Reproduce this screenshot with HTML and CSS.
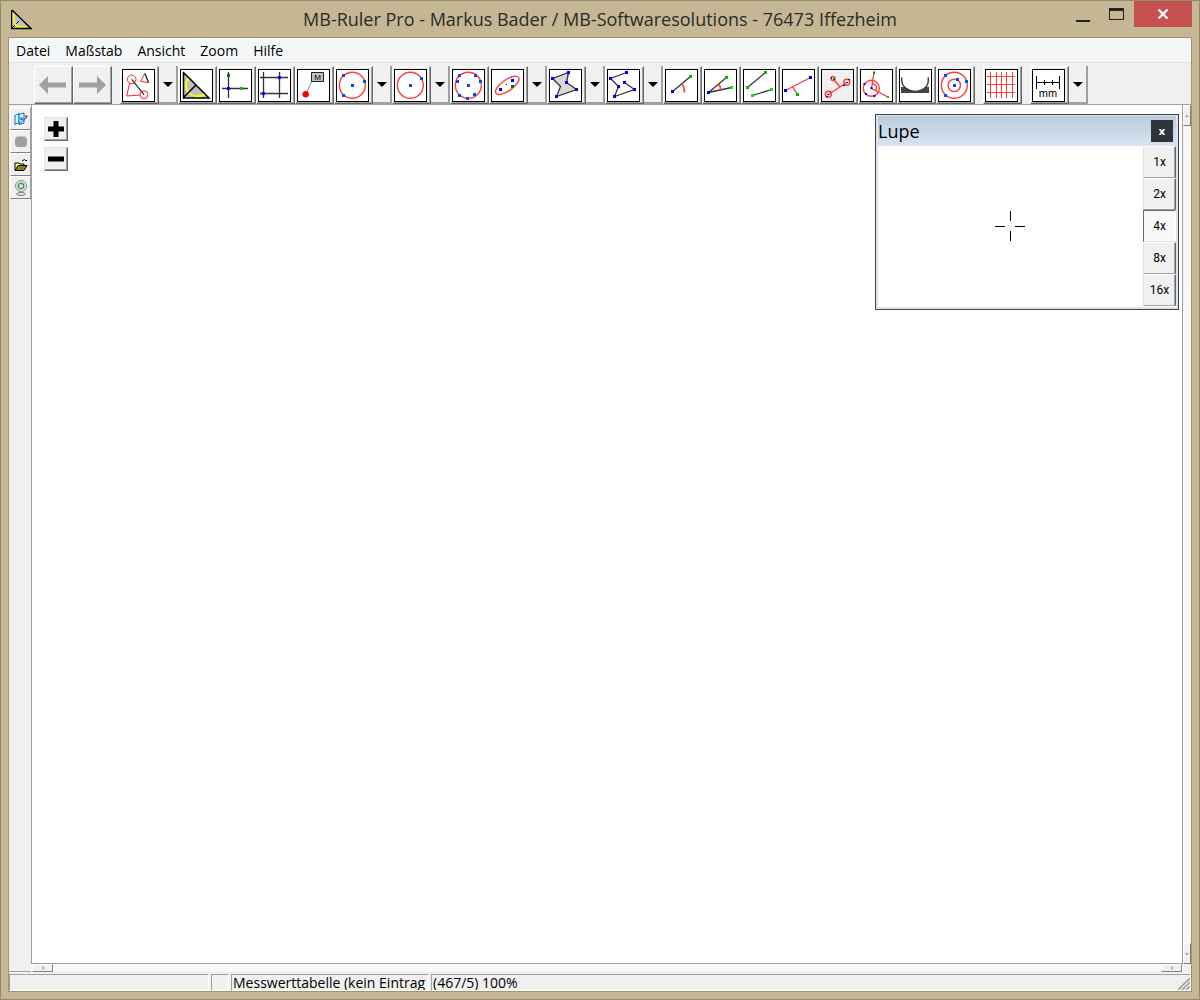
FILE: index.html
```html
<!DOCTYPE html>
<html lang="de">
<head>
<meta charset="utf-8">
<meta name="viewport" content="width=device-width, initial-scale=1">
<title>MB-Ruler Pro</title>
<link rel="stylesheet" href="styles.css">
</head>
<body>
<div class="window">
  <header class="titlebar">
    <svg class="app-icon" viewBox="0 0 21 21" aria-hidden="true"><path d="M1 1v18h18z" fill="#c0c0c0"/><path d="M3 4v8q1 5 5 6h7" fill="none" stroke="#ff0" stroke-width="1.6"/><path d="M1 19l8-8" stroke="#000" stroke-dasharray="4 2"/><path d="M.5 1v18.5H20L1 1" fill="none" stroke="#000" stroke-width="1.4"/></svg>
    <h1 class="caption">MB-Ruler Pro - Markus Bader / MB-Softwaresolutions - 76473 Iffezheim</h1>
    <div class="window-controls">
      <button class="control" aria-label="Minimieren"><svg width="14" height="16" viewBox="0 0 14 16"><path d="M0 14h14v2H0z" fill="#222"/></svg></button>
      <button class="control" aria-label="Maximieren"><svg width="15" height="12" viewBox="0 0 15 12"><path d="M0 0h15v12H0zM1 3v8h13V3z" fill="#222" fill-rule="evenodd"/></svg></button>
      <button class="control close" aria-label="Schließen"><svg width="12" height="10" viewBox="0 0 12 10"><path d="M1.500 .5l9 9M10.500 .5l-9 9" stroke="#fff" stroke-width="2.200"/></svg></button>
    </div>
  </header>

  <div class="client">
    <nav class="menu">
      <a href="#">Datei</a><a href="#">Maßstab</a><a href="#">Ansicht</a><a href="#">Zoom</a><a href="#">Hilfe</a>
    </nav>

    <div class="toolbar" role="toolbar" aria-label="Werkzeuge">
      <div class="group">
        <button class="tool" aria-label="Zurück"><svg class="arrow" viewBox="0 0 28 18"><path d="M0 9l9-9v6.500h18v5H9V18z"/></svg></button>
        <button class="tool" aria-label="Vor"><svg class="arrow" viewBox="0 0 28 18"><path d="M28 9l-9-9v6.500H1v5h18V18z"/></svg></button>
      </div>
      <div class="group">
        <button class="tool" aria-label="Objekte"><svg class="icon" viewBox="1 1 31 31"><path class="red" d="M7.700 14L4.700 27l14-1M22.700 4.500l-4 8 8 1z"/><circle class="red" cx="9.700" cy="10.300" r="4.300"/><circle class="red" cx="22" cy="25.700" r="4"/><path class="dark" d="M9.700 10.300L22 25.700M23 4.500l3.500 9"/></svg></button>
        <button class="drop" aria-label="Objekte wählen"></button>
        <button class="tool" aria-label="Geodreieck"><svg class="icon" viewBox="1 1 31 31"><path d="M3 3v26h26z" fill="#c0c0c0"/><path d="M8.500 9C1 18 10 32 25 25.500" fill="none" stroke="#ff0" stroke-width="2"/><path d="M3.500 3v26H29L3 3M3 29l13-13" fill="none" stroke="#000" stroke-width="1.500"/></svg></button>
        <button class="tool" aria-label="Koordinatensystem"><svg class="icon" viewBox="1 1 31 31"><path class="dark" d="M9.500 3v26M3 19.500h26"/><path class="dot darkgreen" d="M9.500 6.500h0"/><path class="dot blue" d="M9.500 19.500h0"/><path class="dot green" d="M22.500 19.500h0"/></svg></button>
        <button class="tool" aria-label="Linien"><svg class="icon" viewBox="1 1 31 31"><path class="dark" d="M5.500 3v26M21.500 3v26M2 8.500h28M2 24.500h28"/><path class="dot blue" d="M21.500 8.500h0M5.500 24.500h0"/></svg></button>
        <button class="tool" aria-label="Messpunkt"><svg class="icon" viewBox="1 1 31 31"><path d="M8.700 25L15 12" stroke="#888"/><circle cx="8.700" cy="25.300" r="3.200" fill="red"/><path d="M14.500 3.500h12v9h-12z" fill="#c0c0c0" stroke="#222"/><text x="20.500" y="11" text-anchor="middle" font-size="8">M</text></svg></button>
        <button class="tool" aria-label="Kreis durch drei Punkte"><svg class="icon" viewBox="1 1 31 31"><circle class="ring" cx="16.300" cy="16.300" r="13"/><path class="dot azure" d="M16.500 16.500h0M7.500 6.500h0M28.500 12.500h0M7.500 26.500h0"/></svg></button>
        <button class="drop" aria-label="Kreis wählen"></button>
        <button class="tool" aria-label="Kreis mit Mittelpunkt"><svg class="icon" viewBox="1 1 31 31"><circle class="ring" cx="16.300" cy="16.300" r="13"/><path class="dot azure" d="M16.500 16.500h0M27.500 9.500h0"/></svg></button>
        <button class="drop" aria-label="Mittelpunktkreis wählen"></button>
        <button class="tool" aria-label="Ausgleichskreis"><svg class="icon" viewBox="1 1 31 31"><circle class="ring" cx="16.300" cy="16.300" r="13"/><path class="dot azure" d="M16.500 16.500h0M7.500 6.500h0M23.500 6.500h0M5.500 12.500h0M28.500 12.500h0M7.500 26.500h0M22.500 25.500h0M15.500 29.500h0"/></svg></button>
        <button class="tool" aria-label="Ellipse"><svg class="icon" viewBox="1 1 31 31"><ellipse class="ring" cx="16.300" cy="16.300" rx="13.800" ry="5.500" transform="rotate(-35 16.300 16.300)"/><path class="dot blue" d="M9.500 20.500h0M21.500 11.500h0"/><path class="dot darkgreen" d="M21.500 17.500h0"/><path d="M15 15h1v1h-1z" fill="#00c"/></svg></button>
        <button class="drop" aria-label="Ellipse wählen"></button>
        <button class="tool" aria-label="Polygon"><svg class="icon" viewBox="1 1 31 31"><path class="dark filled" d="M19.500 3.500l-2 10 10 7-20 7 4-10-8-8z"/><path class="dot blue" d="M19.500 3.500h0M17.500 13.500h0M27.500 20.500h0M7.500 27.500h0M3.500 9.500h0"/></svg></button>
        <button class="drop" aria-label="Polygon wählen"></button>
        <button class="tool" aria-label="Linienzug"><svg class="icon" viewBox="1 1 31 31"><path class="dark" d="M19.500 3.500l-16 6 8 8-4 10 20-7-10-7"/><path class="dot blue" d="M19.500 3.500h0M3.500 9.500h0M11.500 17.500h0M7.500 27.500h0M27.500 20.500h0M17.500 13.500h0"/></svg></button>
        <button class="drop" aria-label="Linienzug wählen"></button>
        <button class="tool" aria-label="Strecke"><svg class="icon" viewBox="1 1 31 31"><path class="dark" d="M7.500 22.500l18-15"/><path class="arc" d="M16.500 14.500q3 3 3 9"/><path class="dot blue" d="M7.500 22.500h0"/><path class="dot darkgreen2" d="M25.500 7.500h0"/></svg></button>
        <button class="tool" aria-label="Winkel"><svg class="icon" viewBox="1 1 31 31"><path class="dark" d="M22.500 8.500l-18 15 23-5"/><path class="arc" d="M14 14.500q3 3 2.500 7"/><path class="dot blue" d="M4.500 23.500h0"/><path class="dot darkgreen2" d="M22.500 8.500h0"/><path class="dot lime" d="M27.500 18.500h0"/></svg></button>
        <button class="tool" aria-label="Winkel zwischen zwei Linien"><svg class="icon" viewBox="1 1 31 31"><path class="dark" d="M4.500 18.500l18-15M9.500 26.500l19-6"/><path class="dot darkgreen2" d="M4.500 18.500h0M22.500 3.500h0"/><path class="dot lime" d="M9.500 26.500h0M28.500 20.500h0"/></svg></button>
        <button class="tool" aria-label="Abstand Punkt zu Gerade"><svg class="icon" viewBox="1 1 31 31"><path class="ring" d="M3.500 21.500l25-13M10.500 17.500l5 8"/><path class="dot blue" d="M3.500 21.500h0M28.500 8.500h0"/><path class="dot darkgreen2" d="M15.500 25.500h0"/></svg></button>
        <button class="tool" aria-label="Kreisabstand"><svg class="icon grey" viewBox="1 1 31 31"><path class="ring" d="M7.500 25.500l18-12M12 9.500l7 8.500"/><circle class="ring" cx="7.300" cy="25.300" r="3"/><circle class="ring" cx="25.700" cy="13.300" r="3"/><circle class="ring" cx="12" cy="9.500" r="2"/><path d="M6 26h2v-1H6zM25 13h2v1h-2z" fill="#222"/><path d="M22 16h2v1h-2zM27 10h2v1h-2zM5 27h2v1H5zM9 22h1v1H9zM10 8h1v2h-1z" fill="#00f"/><path d="M12 9h2v2h-2z" fill="#080"/></svg></button>
        <button class="tool" aria-label="Winkel im Kreis"><svg class="icon" viewBox="1 1 31 31"><circle class="ring" cx="11.300" cy="19.300" r="8"/><path class="ring" d="M14 3.500l-2.500 16 16.500 8.500M12 14.500q6 1 4 7"/><path class="dot blue small" d="M4.500 15h0M6 25h0M14.500 27h0M11.500 19h0"/><path class="dot darkgreen small" d="M14 3.500h0"/><path class="dot green small" d="M28 28h0"/></svg></button>
        <button class="tool" aria-label="Kontaktwinkel"><svg class="icon" viewBox="1 1 31 31"><path d="M2 18h28v6H2z" fill="#444"/><path d="M2.700 8.500v3C4 26 29 26 29.300 11.500v-3" fill="#fff" stroke="#333" stroke-width="1.400"/></svg></button>
        <button class="tool" aria-label="Konzentrische Kreise"><svg class="icon" viewBox="1 1 31 31"><circle class="ring" cx="16.300" cy="16.300" r="13"/><circle class="ring" cx="16.300" cy="16.300" r="6.200"/><path class="dot azure" d="M16.500 16.500h0M7.500 6.500h0M19.500 10.500h0M28.500 12.500h0M7.500 26.500h0"/></svg></button>
      </div>
      <div class="group">
        <button class="tool" aria-label="Raster"><svg class="icon" viewBox="1 1 31 31"><path class="ring thin" d="M5.500 3v26M11.500 3v26M16.500 3v26M21.500 3v26M27.500 3v26M2 7.500h28M2 15.500h28M2 23.500h28"/></svg></button>
      </div>
      <div class="group">
        <button class="tool" aria-label="Einheit mm"><svg class="icon" viewBox="1 1 31 31"><path d="M4.500 7v13M27.500 7v13M4 13.500h24M12.500 11v5M20.500 11v5" stroke="#000"/><text x="16" y="28" text-anchor="middle" font-size="11">mm</text></svg></button>
        <button class="drop" aria-label="Einheit wählen"></button>
      </div>
    </div>

    <div class="workspace">
      <aside class="sidebar">
        <button class="side-button" aria-label="Aus Zwischenablage"><svg viewBox="0 0 14 14"><path d="M1 3.500l4-2v9l-4 2z" fill="#cff" stroke="#26a"/><path d="M5 2.500l5-1.500v10l-5 1.500z" fill="#dff" stroke="#06c"/><path d="M6 6h3M6 8l3-1M5 12l7-6" stroke="#05c"/><path d="M11 3l3 1-2 3z" fill="#c22"/></svg></button>
        <button class="side-button" aria-label="Bildschirmfoto"><svg viewBox="0 0 14 14"><path d="M3 1.500h8L13 4v6l-2 2H3l-2-2V4z" fill="#a0a0a0"/></svg></button>
        <button class="side-button" aria-label="Bild öffnen"><svg viewBox="0 0 14 14"><path d="M1 12V5h4l1 1h4v2" fill="#ff8" stroke="#000"/><path d="M1 12.500l3-5h9l-3 5z" fill="#880" stroke="#000"/><path d="M8 3q3-3 4 0l1-1" fill="none" stroke="#000"/></svg></button>
        <button class="side-button" aria-label="Webcam"><svg viewBox="0 0 14 16"><ellipse cx="7" cy="14" rx="4.500" ry="1.500" fill="#eee" stroke="#777"/><circle cx="7" cy="6" r="5.500" fill="#dfe8df" stroke="#889"/><circle cx="7" cy="6" r="3" fill="#9d9" stroke="#475"/><circle cx="7" cy="6" r="1" fill="#efe"/></svg></button>
      </aside>

      <main class="canvas">
        <div class="zoom-buttons">
          <button class="zoom-button" aria-label="Vergrößern"><svg viewBox="0 0 16 16"><path d="M5.500 0h5v5.500H16v5h-5.500V16h-5v-5.500H0v-5h5.500z"/></svg></button>
          <button class="zoom-button" aria-label="Verkleinern"><svg viewBox="0 0 16 16"><path d="M0 5.500h16v5H0z"/></svg></button>
        </div>
        <section class="lupe">
          <header class="lupe-title"><h2>Lupe</h2><button class="lupe-close" aria-label="Lupe schließen">x</button></header>
          <div class="lupe-body">
            <div class="lupe-view"><svg width="31" height="31" viewBox="0 0 31 31"><path d="M0 15.500h10M20 15.500h10M15.500 0v10M15.500 20v10" stroke="#000"/></svg></div>
            <div class="factors">
              <button>1x</button><button>2x</button><button class="active" aria-pressed="true">4x</button><button>8x</button><button>16x</button>
            </div>
          </div>
        </section>
      </main>

      <div class="scroll vertical"><button aria-label="Nach oben"><svg viewBox="0 0 4 4"><path d="M2 1l2 2H0z"/></svg></button><button aria-label="Nach unten"><svg viewBox="0 0 4 4"><path d="M2 3l2-2H0z"/></svg></button></div>
      <div class="scroll horizontal"><button aria-label="Nach links"><svg viewBox="0 0 4 4"><path d="M1 2l2-2v4z"/></svg></button><button aria-label="Nach rechts"><svg viewBox="0 0 4 4"><path d="M3 2L1 0v4z"/></svg></button></div>
    </div>

    <footer class="status">
      <div class="pane"></div><div class="pane"></div><div class="pane">Messwerttabelle (kein Eintrag</div>
      <div class="pane last">(467/5) 100%<svg class="grip" viewBox="0 0 12 12"><path d="M0 12L12 0M4 12l8-8M8 12l4-4" stroke="#a0a0a0" stroke-width="1.600"/></svg></div>
    </footer>
  </div>
</div>
</body>
</html>
```
FILE: styles.css
```css
* { box-sizing: border-box; }

body {
  margin: 0;
  font-family: "Noto Sans", "Open Sans", sans-serif;
  color: #000;
}

button {
  display: flex;
  align-items: center;
  justify-content: center;
  margin: 0;
  padding: 0;
  border: 0;
  border-radius: 0;
  background: #f0f0f0;
  color: #000;
  font-family: inherit;
}

h1, h2 { margin: 0; font-weight: 400; }

.window {
  display: flex;
  flex-direction: column;
  height: 100vh;
  padding: 0 7px 7px;
  border: 1px solid #94896c;
  background: #c5b793;
}

/* Title bar */
.titlebar {
  display: grid;
  grid-template-columns: 134px 1fr 134px;
  height: 36px;
  flex: none;
}

.app-icon { width: 21px; height: 21px; margin: 8px 0 0 3px; }

.caption {
  overflow: hidden;
  color: #2b2b2b;
  font-family: "Open Sans", "Noto Sans", sans-serif;
  font-size: 18px;
  line-height: 36px;
  text-align: center;
  white-space: nowrap;
}

.window-controls { display: flex; align-items: flex-start; justify-content: flex-end; }
.control { width: 34px; height: 26px; padding-right: 1px; background: transparent; }
.control.close { width: 58px; background: #c75050; }

.client {
  display: flex;
  flex-direction: column;
  flex: 1;
  min-height: 0;
  border: 1px solid #a0946f;
  background: #f0f0f0;
}

/* Menu */
.menu {
  display: flex;
  gap: 15px;
  flex: none;
  height: 25px;
  padding: 0 7px;
  border-bottom: 1px solid #e4e4e4;
  background: #f5f6f8;
  font-family: "Open Sans", "Noto Sans", sans-serif;
  font-size: 14px;
  line-height: 26px;
}

.menu a { color: #000; text-decoration: none; }

/* Toolbar */
.toolbar {
  display: flex;
  gap: 8px;
  flex: none;
  height: 42px;
  padding: 3px 0 0 25px;
  border-bottom: 1px solid #a0a0a0;
}

.group { display: flex; height: 38px; }

.tool {
  width: 39px;
  padding-right: 2px;
  border: 1px solid;
  border-color: #fff #696969 #696969 #fff;
  box-shadow: inset -1px -1px #a0a0a0;
}

.drop {
  width: 19px;
  border-right: 2px solid #a0a0a0;
  border-bottom: 2px solid #a0a0a0;
}

.drop::before {
  border: 5px solid transparent;
  border-top-color: #000;
  border-bottom-width: 0;
  content: "";
}

.arrow { width: 28px; height: 18px; fill: #a0a0a0; }

.icon {
  width: 33px;
  height: 33px;
  border: 1px solid #000;
  background: #fff;
  font-family: "Liberation Sans", sans-serif;
}

.icon.grey { background: #f0f0f0; }
.icon .red { fill: none; stroke: #f22; }
.icon .ring { fill: none; stroke: #ff3c3c; stroke-width: 1.4; }
.icon .ring.thin { stroke-width: 1; }
.icon .arc { fill: none; stroke: #f33; stroke-width: 1.6; }
.icon .dark { fill: none; stroke: #333; stroke-width: 1.3; }
.icon .dark.filled { fill: #d8d8d8; }
.icon .dot { fill: none; stroke-width: 3; stroke-linecap: square; }
.icon .dot.small { stroke-width: 2; }
.icon .blue { stroke: #00f; }
.icon .azure { stroke: #0050f0; }
.icon .green { stroke: #00c400; }
.icon .darkgreen { stroke: #008000; }
.icon .darkgreen2 { stroke: #00b400; }
.icon .lime { stroke: #00f000; }

/* Work area */
.workspace {
  display: grid;
  grid-template: 1fr 8px / 22px 1fr 8px;
  flex: 1;
  min-height: 0;
}

.sidebar {
  grid-row: 1 / 3;
  padding: 2px 0 0 1px;
  border-bottom: 1px solid #a0a0a0;
}

.side-button {
  width: 21px;
  height: 23px;
  border: 1px solid;
  border-color: #fff #a0a0a0 #808080 #fff;
}

.side-button svg { width: 14px; height: 16px; }

.canvas {
  position: relative;
  border: solid #a0a0a0;
  border-width: 0 1px 1px;
  background: #fff;
}

.zoom-buttons {
  display: flex;
  flex-direction: column;
  gap: 6px;
  padding: 12px;
}

.zoom-button {
  width: 24px;
  height: 24px;
  border: 1px solid;
  border-color: #e3e3e3 #696969 #696969 #e3e3e3;
  box-shadow: inset -1px -1px #a0a0a0;
}

.zoom-button svg { width: 16px; height: 16px; }

.scroll {
  display: flex;
  justify-content: space-between;
  background: repeating-conic-gradient(#f0f0f0 0 25%, #fff 0 50%) 0 0 / 2px 2px;
}

.scroll.vertical { flex-direction: column; }
.scroll.horizontal { grid-column: 2; padding: 0 1px; }
.scroll button { width: 8px; height: 21px; border: 1px solid; border-color: #fff #808080 #808080 #fff; }
.scroll.horizontal button { width: 21px; height: 8px; }
.scroll svg { flex: none; width: 4px; height: 4px; fill: #999; }

/* Magnifier window floating over the canvas */
.lupe {
  position: absolute;
  top: 9px;
  right: 3px;
  width: 304px;
  padding: 1px 2px 2px;
  border: 1px solid #444;
  background: #d7e4f1;
}

.lupe-title {
  display: flex;
  align-items: center;
  justify-content: space-between;
  height: 30px;
  padding: 0 3px 0 0;
  background: linear-gradient(#bccbdb, #d7e4f1);
}

.lupe-title h2 {
  font-family: "Open Sans", "Noto Sans", sans-serif;
  font-size: 18px;
  line-height: 32px;
}

.lupe-close {
  width: 22px;
  height: 22px;
  padding-bottom: 2px;
  background: #2f3438;
  color: #fff;
  font-size: 11px;
  font-weight: 700;
}

.lupe-body { display: flex; padding-bottom: 1px; background: #fff; }
.lupe-view { display: flex; flex: 1; align-items: center; justify-content: center; }
.factors { width: 33px; }

.factors button {
  width: 33px;
  height: 32px;
  border: 1px solid;
  border-color: #fff #696969 #a0a0a0 #e3e3e3;
  box-shadow: inset -1px 0 #a0a0a0;
  font-family: Roboto, sans-serif;
  font-size: 12px;
}

.factors .active {
  border-color: #696969 #fff #e3e3e3 #696969;
  box-shadow: none;
  background: #f9f9f9;
}

/* Status bar */
.status {
  display: grid;
  grid-template-columns: 200px 18px 198px 1fr;
  gap: 2px;
  flex: none;
  height: 19px;
  padding-top: 2px;
  font-family: "Open Sans", "Noto Sans", sans-serif;
  font-size: 14px;
  line-height: 16px;
}

.pane {
  overflow: hidden;
  padding-left: 1px;
  border: 1px solid;
  border-color: #a0a0a0 #fff #fff #a0a0a0;
  white-space: nowrap;
}

.pane.last { display: flex; justify-content: space-between; }
.grip { width: 12px; height: 12px; align-self: flex-end; }
```
